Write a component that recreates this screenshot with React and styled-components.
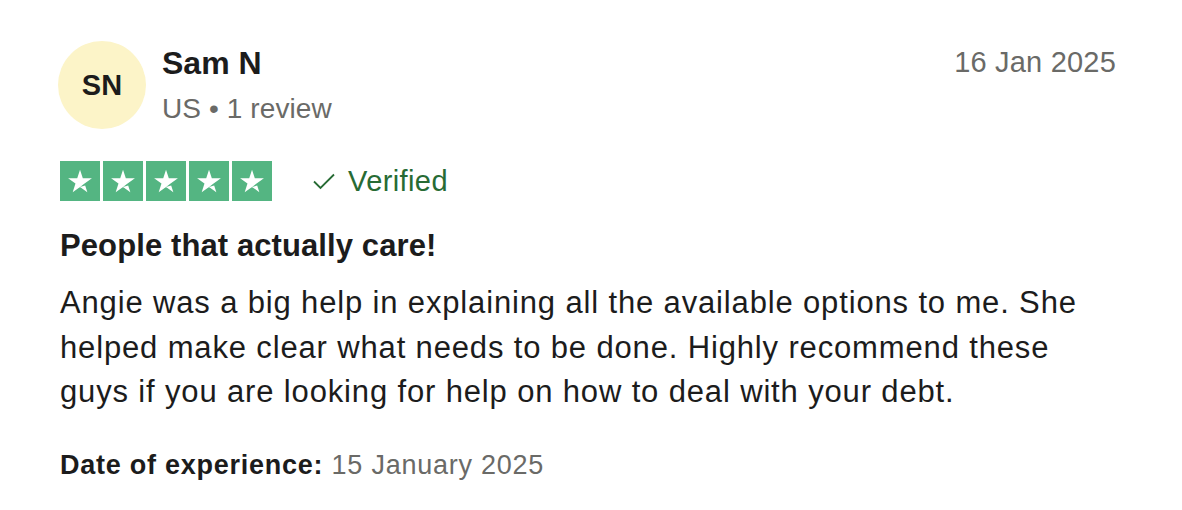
import React from 'react';
import styled, { createGlobalStyle } from 'styled-components';

const GlobalStyle = createGlobalStyle`
  html, body {
    margin: 0;
    padding: 0;
    background: #ffffff;
  }
  body {
    font-family: "Liberation Sans", Arial, Helvetica, sans-serif;
    color: #1c1c1c;
  }
`;

const Card = styled.article`
  width: 1182px;
  height: 510px;
  box-sizing: border-box;
  padding: 41px 66px 0 58px;
  display: flex;
  flex-direction: column;
`;

const Header = styled.header`
  display: flex;
  align-items: flex-start;
  gap: 16px;
`;

const Avatar = styled.div`
  width: 88px;
  height: 88px;
  border-radius: 50%;
  background: #fcf4c8;
  display: flex;
  align-items: center;
  justify-content: center;
  font-weight: 700;
  font-size: 29px;
  color: #1c1c1c;
  flex-shrink: 0;
`;

const Who = styled.div`
  display: flex;
  flex-direction: column;
  flex: 1;
  padding-top: 3px;
`;

const Name = styled.span`
  font-size: 32px;
  font-weight: 700;
  line-height: 38px;
  color: #1c1c1c;
`;

const Meta = styled.span`
  font-size: 28px;
  line-height: 36px;
  margin-top: 9px;
  letter-spacing: 0.1px;
  color: #6a6a67;
`;

const PostedDate = styled.time`
  font-size: 29px;
  line-height: 38px;
  padding-top: 2px;
  letter-spacing: 0.2px;
  color: #6a6a67;
`;

const RatingRow = styled.div`
  display: flex;
  align-items: center;
  margin-top: 32px;
  padding-left: 2px;
`;

const Stars = styled.div`
  display: flex;
  gap: 3px;
`;

const StarBox = styled.div`
  width: 40px;
  height: 40px;
  background: ${p => (p.$on ? '#54b582' : '#dcdce6')};
  display: flex;
  align-items: center;
  justify-content: center;
`;

const Verified = styled.span`
  display: flex;
  align-items: center;
  gap: 12px;
  margin-left: 40px;
  font-size: 29px;
  letter-spacing: 0.4px;
  color: #276b34;
`;

const Title = styled.h2`
  margin: 25px 0 0 2px;
  font-size: 31px;
  line-height: 40px;
  font-weight: 700;
  letter-spacing: 0.1px;
  color: #1c1c1c;
`;

const Body = styled.p`
  margin: 15px 0 0 2px;
  font-size: 31px;
  line-height: 44.5px;
  letter-spacing: 0.85px;
  color: #1c1c1c;
  max-width: 1035px;
`;

const Experience = styled.p`
  margin: 32px 0 0 2px;
  font-size: 27px;
  line-height: 36px;
  letter-spacing: 0.75px;
  color: #6a6a67;

  strong {
    color: #1c1c1c;
    font-weight: 700;
  }
`;

const Star = () => (
  <svg width="34" height="34" viewBox="0 0 96 96">
    <path
      fill="#fff"
      d="M48.05 64.69L62.65 60.99L68.75 79.79L48.05 64.69ZM81.65 40.39H55.95L48.05 16.19L40.15 40.39H14.45L35.25 55.39L27.35 79.59L48.15 64.59L60.95 55.39L81.65 40.39Z"
    />
  </svg>
);

const Check = () => (
  <svg width="24" height="18" viewBox="0 0 24 18" fill="none">
    <path d="M2 9.5L8.5 16L22 2.5" stroke="#276b34" strokeWidth="1.8" />
  </svg>
);

export default function App() {
  const rating = 5;
  return (
    <>
      <GlobalStyle />
      <Card>
        <Header>
          <Avatar>SN</Avatar>
          <Who>
            <Name>Sam N</Name>
            <Meta>US • 1 review</Meta>
          </Who>
          <PostedDate>16 Jan 2025</PostedDate>
        </Header>
        <RatingRow>
          <Stars>
            {[1, 2, 3, 4, 5].map(i => (
              <StarBox key={i} $on={i <= rating}>
                <Star />
              </StarBox>
            ))}
          </Stars>
          <Verified>
            <Check />
            Verified
          </Verified>
        </RatingRow>
        <Title>People that actually care!</Title>
        <Body>
          Angie was a big help in explaining all the available options to me. She helped make
          clear what needs to be done. Highly recommend these guys if you are looking for help on
          how to deal with your debt.
        </Body>
        <Experience>
          <strong>Date of experience:</strong> 15 January 2025
        </Experience>
      </Card>
    </>
  );
}
